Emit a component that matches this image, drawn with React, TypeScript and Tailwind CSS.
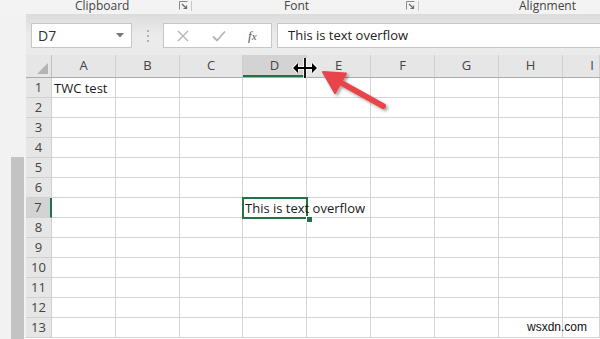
import React from "react";

const cols = ["A", "B", "C", "D", "E", "F", "G", "H", "I"];
const colW = ["w-[64px]", "w-[64px]", "w-[63px]", "w-[64px]", "w-[64px]", "w-[64px]", "w-[64px]", "w-[64px]", "flex-1"];
const rows = [1, 2, 3, 4, 5, 6, 7, 8, 9, 10, 11, 12, 13];

function Launcher() {
  return (
    <svg width="9" height="9" viewBox="0 0 9 9" className="shrink-0">
      <path d="M0.5 8.5V0.5H8.5" fill="none" stroke="#8a8a8a" strokeWidth="1" />
      <path d="M3 3L7.5 7.5M7.5 4.5V7.5H4.5" fill="none" stroke="#6a6a6a" strokeWidth="1.2" />
    </svg>
  );
}

export default function App() {
  return (
    <div
      className="relative w-[600px] h-[339px] overflow-hidden bg-[#f3f3f3] flex flex-col"
      style={{ fontFamily: '"Open Sans", "Noto Sans", sans-serif' }}
    >
      {/* Ribbon group labels */}
      <div className="h-[14px] shrink-0 flex items-start text-[12px] leading-[13px] text-[#444]">
        <span className="w-[179px] pl-[75px] -mt-[1px]">Clipboard</span>
        <div className="mt-[1px] w-[12px] flex"><Launcher /></div>
        <div className="w-[1px] h-[10px] bg-[#c8c8c8] mt-[1px]" />
        <span className="w-[214px] pl-[92px] -mt-[1px]">Font</span>
        <div className="mt-[1px] w-[12px] flex"><Launcher /></div>
        <div className="w-[1px] h-[10px] bg-[#c8c8c8] mt-[1px]" />
        <span className="pl-[100px] -mt-[1px]">Alignment</span>
      </div>

      <div className="flex flex-1 min-h-0">
        {/* left gutter */}
        <div className="w-[26px] shrink-0 bg-[#f2f2f2] flex flex-col">
          <div className="h-[143px]" />
          <div className="ml-[11px] w-[13px] flex-1 bg-[#c3c3c3]" />
        </div>

        <div className="flex-1 flex flex-col min-w-0">
          {/* formula bar */}
          <div className="h-[41px] shrink-0 flex items-start pt-[9px] bg-gradient-to-b from-[#dcdcdc] via-[#ebebeb] to-[#ebebeb]">
            <div className="ml-[5px] w-[101px] h-[25px] bg-white border border-[#c6c6c6] flex items-center justify-between pl-[6px] pr-[7px]">
              <span className="text-[14px] text-[#333]">D7</span>
              <svg width="8" height="5" viewBox="0 0 8 5"><path d="M0 0H8L4 4.5Z" fill="#777" /></svg>
            </div>
            <div className="w-[31px] h-[25px] flex flex-col items-center justify-center gap-[3px]">
              <div className="w-[2px] h-[2px] bg-[#b0b0b0]" />
              <div className="w-[2px] h-[2px] bg-[#b0b0b0]" />
              <div className="w-[2px] h-[2px] bg-[#b0b0b0]" />
            </div>
            <div className="w-[109px] h-[25px] bg-white border border-[#c6c6c6] flex items-center pl-[13px]">
              <svg width="12" height="12" viewBox="0 0 12 12"><path d="M1 1L11 11M11 1L1 11" stroke="#b5b5b5" strokeWidth="1.4" /></svg>
              <svg width="14" height="12" viewBox="0 0 14 12" className="ml-[23px]"><path d="M1 6.5L5 10.5L13 1.5" fill="none" stroke="#b5b5b5" strokeWidth="1.8" /></svg>
              <span className="ml-[22px] text-[13px] italic text-[#555]" style={{ fontFamily: '"Liberation Serif", serif' }}>f<span className="text-[11px]">x</span></span>
            </div>
            <div className="ml-[5px] flex-1 h-[25px] bg-white border border-r-0 border-[#c6c6c6] flex items-center pl-[10px]">
              <span className="text-[13px] text-[#222]">This is text overflow</span>
            </div>
          </div>

          {/* grid */}
          <div className="relative flex-1 bg-white flex flex-col text-[13px]">
            <div className="h-[23px] shrink-0 flex bg-[#e6e6e6] border-b border-[#ababab]">
              <div className="w-[26px] shrink-0 relative border-r border-[#c0c0c0]">
                <svg width="11" height="11" viewBox="0 0 11 11" className="absolute right-[3px] bottom-[3px]"><path d="M11 0V11H0Z" fill="#b4b4b4" /></svg>
              </div>
              {cols.map((c, i) => (
                <div
                  key={c}
                  className={`${colW[i]} shrink-0 flex items-center justify-center border-r border-[#d0d0d0] text-[#444] ${c === "D" ? "bg-[#d3d3d3] border-b-2 border-b-[#217346] pt-[2px]" : ""} ${c === "I" ? "justify-end pr-[5px]" : ""}`}
                >
                  {c}
                </div>
              ))}
            </div>
            {rows.map((r) => (
              <div key={r} className="h-[20px] shrink-0 flex">
                <div
                  className={`w-[26px] shrink-0 flex items-center justify-center border-b border-[#d0d0d0] text-[#444] ${r === 7 ? "bg-[#d3d3d3] border-r-2 border-r-[#217346]" : "bg-[#e6e6e6] border-r border-[#ababab]"}`}
                >
                  {r}
                </div>
                {cols.map((c, i) => (
                  <div
                    key={c}
                    className={`${colW[i]} shrink-0 border-r border-b border-[#d4d4d4] flex items-end pl-[2px] leading-[18px] text-[#1a1a1a] whitespace-nowrap overflow-visible`}
                  >
                    {r === 1 && c === "A" ? "TWC test" : ""}
                    {r === 7 && c === "D" ? <span className="relative z-10">This is text overflow</span> : ""}
                  </div>
                ))}
              </div>
            ))}

            {/* selected cell D7 */}
            <div className="absolute left-[216px] top-[142px] w-[66px] h-[22px] border-2 border-[#217346] pointer-events-none" />
            <div className="absolute left-[280px] top-[161px] w-[5px] h-[5px] bg-[#217346] border border-white box-content" />
          </div>
        </div>
      </div>

      {/* resize cursor */}
      <svg className="absolute left-[291px] top-[57px]" width="28" height="22" viewBox="0 0 28 22">
        <g stroke="#fff" strokeWidth="3.5" fill="none" strokeLinejoin="round">
          <path d="M14 1V21M3 11H25" />
          <path d="M7 7L3 11L7 15M21 7L25 11L21 15" />
        </g>
        <g stroke="#000" strokeWidth="1.8" fill="none">
          <path d="M14 1V21M3 11H25" />
        </g>
        <path d="M2 11L7 6V16Z M26 11L21 6V16Z" fill="#000" />
      </svg>

      {/* red arrow */}
      <svg className="absolute left-0 top-0 pointer-events-none" width="600" height="339" viewBox="0 0 600 339">
        <defs>
          <filter id="sh" x="-20%" y="-20%" width="140%" height="140%">
            <feDropShadow dx="2" dy="2" stdDeviation="1.5" floodColor="#000" floodOpacity="0.35" />
          </filter>
        </defs>
        <g filter="url(#sh)">
          <line x1="383" y1="106" x2="338" y2="81" stroke="#e8444b" strokeWidth="6" strokeLinecap="round" />
          <path d="M323 72L346 73.5L335 93Z" fill="#e8444b" stroke="#e8444b" strokeWidth="2" strokeLinejoin="round" />
        </g>
      </svg>

      <div
        className="absolute left-[527px] top-[320px] text-[12px] leading-[14px] text-[#111]"
        style={{ fontFamily: '"Liberation Sans", Arial, sans-serif' }}
      >
        wsxdn.com
      </div>
    </div>
  );
}
